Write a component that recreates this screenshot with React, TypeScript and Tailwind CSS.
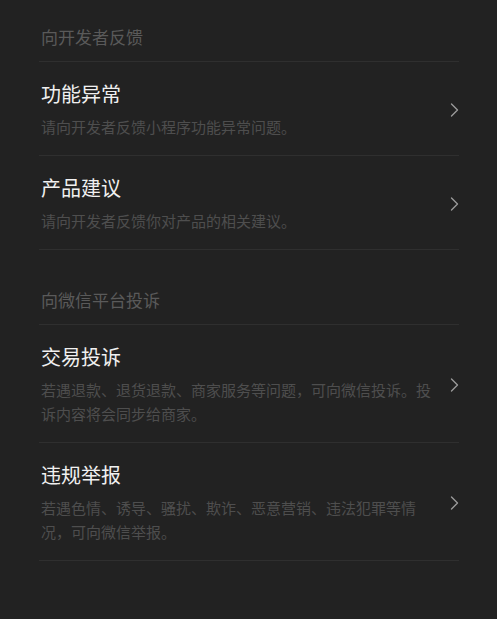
const SECTIONS = [
  {
    header: '向开发者反馈',
    items: [
      { title: '功能异常', desc: '请向开发者反馈小程序功能异常问题。' },
      { title: '产品建议', desc: '请向开发者反馈你对产品的相关建议。' },
    ],
  },
  {
    header: '向微信平台投诉',
    items: [
      { title: '交易投诉', desc: '若遇退款、退货退款、商家服务等问题，可向微信投诉。投诉内容将会同步给商家。' },
      { title: '违规举报', desc: '若遇色情、诱导、骚扰、欺诈、恶意营销、违法犯罪等情况，可向微信举报。' },
    ],
  },
];

function Chevron() {
  return (
    <svg width="9" height="14" viewBox="0 0 9 14" fill="none" className="shrink-0">
      <polyline points="1.5,1 7.5,7 1.5,13" stroke="#9a9a9a" strokeWidth="1.4" strokeLinecap="round" strokeLinejoin="round" />
    </svg>
  );
}

export default function App() {
  return (
    <div
      className="min-h-[619px] w-full bg-[#222222] pb-10"
      style={{ fontFamily: '"Noto Sans CJK SC", "Noto Sans", sans-serif' }}
    >
      <div className="ml-[39px] mr-[38px]">
        {SECTIONS.map((s, si) => (
          <section key={s.header} className={si === 0 ? '' : 'mt-[13px]'}>
            <div className="border-b border-[#2f2f2f] pt-[25px] pb-[12px] pl-[2px] text-[17px] leading-[24px] text-[#5a5a5a]">
              {s.header}
            </div>
            {s.items.map((it) => (
              <button
                key={it.title}
                className="flex w-full items-center gap-[12px] border-b border-[#2f2f2f] pt-[18px] pb-[16px] pl-[2px] text-left"
              >
                <div className="w-[397px]">
                  <div className="text-[20px] leading-[28px] font-normal text-[#f0f0f0]">{it.title}</div>
                  <div className="mt-[7px] text-[15px] leading-[24px] text-[#4e4e4e]">{it.desc}</div>
                </div>
                <div className="ml-auto">
                  <Chevron />
                </div>
              </button>
            ))}
          </section>
        ))}
      </div>
    </div>
  );
}
